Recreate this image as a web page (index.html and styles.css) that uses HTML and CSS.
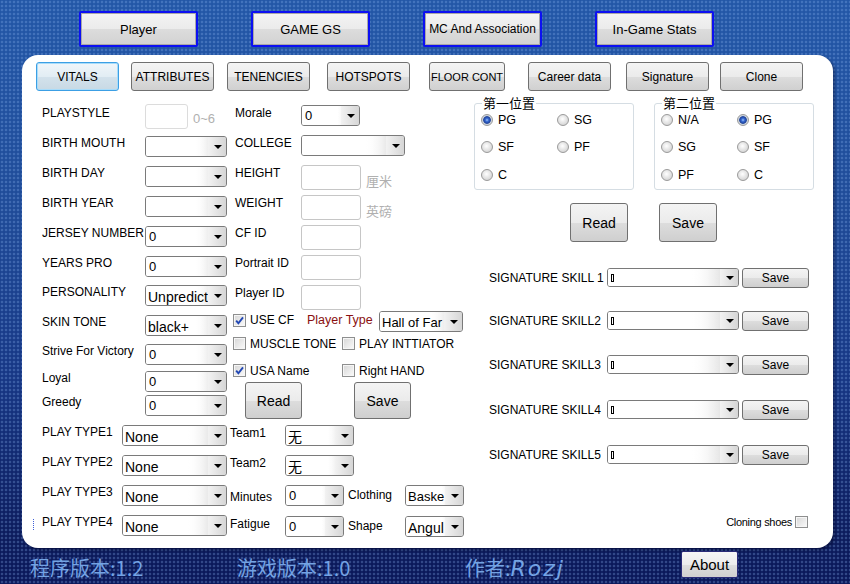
FILE: index.html
```html
<!DOCTYPE html>
<html lang="zh-CN">
<head>
    <meta charset="UTF-8">
    <title>Player Editor</title>
    <link rel="stylesheet" href="styles.css">
</head>
<body>
    <nav class="topbar">
        <button class="top-btn">Player</button>
        <button class="top-btn">GAME GS</button>
        <button class="top-btn top-btn-sm">MC And Association</button>
        <button class="top-btn">In-Game Stats</button>
    </nav>

    <div class="panel">
        <div class="tabs">
            <button class="tab tab-on">VITALS</button>
            <button class="tab">ATTRIBUTES</button>
            <button class="tab">TENENCIES</button>
            <button class="tab">HOTSPOTS</button>
            <button class="tab tab-narrow">FLOOR CONT</button>
            <button class="tab">Career data</button>
            <button class="tab">Signature</button>
            <button class="tab">Clone</button>
        </div>

        <div class="form">
            <!-- 左列 -->
            <div class="col-left">
                <div class="row"><span class="lbl lbl-top">PLAYSTYLE</span><span class="txt txt-off"></span><span class="unit unit-hint">0~6</span></div>
                <div class="row"><span class="lbl">BIRTH MOUTH</span><span class="combo cb-82"><span class="val"></span><i class="arrow"></i></span></div>
                <div class="row"><span class="lbl">BIRTH DAY</span><span class="combo cb-82"><span class="val"></span><i class="arrow"></i></span></div>
                <div class="row"><span class="lbl">BIRTH YEAR</span><span class="combo cb-82"><span class="val"></span><i class="arrow"></i></span></div>
                <div class="row"><span class="lbl">JERSEY NUMBER</span><span class="combo cb-82"><span class="val">0</span><i class="arrow"></i></span></div>
                <div class="row"><span class="lbl">YEARS PRO</span><span class="combo cb-82"><span class="val">0</span><i class="arrow"></i></span></div>
                <div class="row"><span class="lbl">PERSONALITY</span><span class="combo cb-82"><span class="val big">Unpredict</span><i class="arrow"></i></span></div>
                <div class="row"><span class="lbl">SKIN TONE</span><span class="combo cb-82"><span class="val big">black+</span><i class="arrow"></i></span></div>
                <div class="row"><span class="lbl">Strive For Victory</span><span class="combo cb-82"><span class="val">0</span><i class="arrow"></i></span></div>
                <div class="row"><span class="lbl">Loyal</span><span class="combo cb-82"><span class="val">0</span><i class="arrow"></i></span></div>
                <div class="row"><span class="lbl">Greedy</span><span class="combo cb-82"><span class="val">0</span><i class="arrow"></i></span></div>
                <div class="row"><span class="lbl lbl-short">PLAY TYPE1</span><span class="combo cb-105"><span class="val big">None</span><i class="arrow"></i></span></div>
                <div class="row"><span class="lbl lbl-short">PLAY TYPE2</span><span class="combo cb-105"><span class="val big">None</span><i class="arrow"></i></span></div>
                <div class="row"><span class="lbl lbl-short">PLAY TYPE3</span><span class="combo cb-105"><span class="val big">None</span><i class="arrow"></i></span></div>
                <div class="row"><i class="mark"></i><span class="lbl lbl-short">PLAY TYPE4</span><span class="combo cb-105"><span class="val big">None</span><i class="arrow"></i></span></div>
            </div>

            <!-- 中列 -->
            <div class="col-mid">
                <div class="row"><span class="lbl lbl-mid">Morale</span><span class="combo cb-59"><span class="val">0</span><i class="arrow"></i></span></div>
                <div class="row"><span class="lbl lbl-mid">COLLEGE</span><span class="combo cb-104"><span class="val"></span><i class="arrow"></i></span></div>
                <div class="row"><span class="lbl lbl-mid">HEIGHT</span><span class="txt"></span><span class="unit">厘米</span></div>
                <div class="row"><span class="lbl lbl-mid">WEIGHT</span><span class="txt"></span><span class="unit">英磅</span></div>
                <div class="row"><span class="lbl lbl-mid">CF ID</span><span class="txt"></span></div>
                <div class="row"><span class="lbl lbl-mid">Portrait ID</span><span class="txt"></span></div>
                <div class="row"><span class="lbl lbl-mid">Player ID</span><span class="txt"></span></div>
                <div class="row">
                    <label class="chk-item chk-cf"><span class="chk"><svg viewBox="0 0 11 11" width="11" height="11"><path d="M2.2 5.6 L4.4 8.3 L9 2.4" fill="none" stroke="#2147b4" stroke-width="1.9"/></svg></span>USE CF</label>
                    <span class="ptype">Player Type</span>
                    <span class="combo cb-84"><span class="val mid">Hall of Far</span><i class="arrow"></i></span>
                </div>
                <div class="row">
                    <label class="chk-item chk-wide"><span class="chk"></span>MUSCLE TONE</label>
                    <label class="chk-item"><span class="chk"></span>PLAY INTTIATOR</label>
                </div>
                <div class="row">
                    <label class="chk-item chk-wide"><span class="chk"><svg viewBox="0 0 11 11" width="11" height="11"><path d="M2.2 5.6 L4.4 8.3 L9 2.4" fill="none" stroke="#2147b4" stroke-width="1.9"/></svg></span>USA Name</label>
                    <label class="chk-item"><span class="chk"></span>Right HAND</label>
                </div>
                <div class="row btn-row">
                    <button class="btn btn-mid">Read</button>
                    <button class="btn btn-mid">Save</button>
                </div>
                <div class="row"><span class="lbl lbl-team">Team1</span><span class="combo cb-69"><span class="val big cjk">无</span><i class="arrow"></i></span></div>
                <div class="row"><span class="lbl lbl-team">Team2</span><span class="combo cb-69"><span class="val big cjk">无</span><i class="arrow"></i></span></div>
                <div class="row">
                    <span class="lbl lbl-team lbl-low">Minutes</span><span class="combo cb-59"><span class="val">0</span><i class="arrow"></i></span>
                    <span class="lbl lbl-cloth">Clothing</span><span class="combo cb-59"><span class="val mid">Baske</span><i class="arrow"></i></span>
                </div>
                <div class="row">
                    <span class="lbl lbl-team">Fatigue</span><span class="combo cb-59"><span class="val">0</span><i class="arrow"></i></span>
                    <span class="lbl lbl-cloth">Shape</span><span class="combo cb-59"><span class="val big">Angul</span><i class="arrow"></i></span>
                </div>
            </div>

            <!-- 右列 -->
            <div class="col-right">
                <div class="groups">
                    <fieldset class="grp">
                        <legend>第一位置</legend>
                        <div class="radios">
                            <label class="rad"><span class="dot dot-on"></span>PG</label>
                            <label class="rad"><span class="dot"></span>SG</label>
                            <label class="rad"><span class="dot"></span>SF</label>
                            <label class="rad"><span class="dot"></span>PF</label>
                            <label class="rad"><span class="dot"></span>C</label>
                        </div>
                    </fieldset>
                    <fieldset class="grp">
                        <legend>第二位置</legend>
                        <div class="radios">
                            <label class="rad"><span class="dot"></span>N/A</label>
                            <label class="rad"><span class="dot dot-on"></span>PG</label>
                            <label class="rad"><span class="dot"></span>SG</label>
                            <label class="rad"><span class="dot"></span>SF</label>
                            <label class="rad"><span class="dot"></span>PF</label>
                            <label class="rad"><span class="dot"></span>C</label>
                        </div>
                    </fieldset>
                </div>

                <div class="rw-btns">
                    <button class="btn btn-big">Read</button>
                    <button class="btn btn-big">Save</button>
                </div>

                <div class="sig-list">
                    <div class="sig-row"><span class="sig-lbl">SIGNATURE SKILL 1</span><span class="combo cb-132"><span class="val"><i class="caret"></i></span><i class="arrow"></i></span><button class="btn btn-sm">Save</button></div>
                    <div class="sig-row"><span class="sig-lbl">SIGNATURE SKILL2</span><span class="combo cb-132"><span class="val"><i class="caret"></i></span><i class="arrow"></i></span><button class="btn btn-sm">Save</button></div>
                    <div class="sig-row"><span class="sig-lbl">SIGNATURE SKILL3</span><span class="combo cb-132"><span class="val"><i class="caret"></i></span><i class="arrow"></i></span><button class="btn btn-sm">Save</button></div>
                    <div class="sig-row"><span class="sig-lbl">SIGNATURE SKILL4</span><span class="combo cb-132"><span class="val"><i class="caret"></i></span><i class="arrow"></i></span><button class="btn btn-sm">Save</button></div>
                    <div class="sig-row"><span class="sig-lbl">SIGNATURE SKILL5</span><span class="combo cb-132"><span class="val"><i class="caret"></i></span><i class="arrow"></i></span><button class="btn btn-sm">Save</button></div>
                </div>

                <div class="clone-row">
                    <span>Cloning shoes</span><span class="chk"></span>
                </div>
            </div>
        </div>
    </div>

    <footer class="footer">
        <span class="ver">程序版本:1.2</span>
        <span class="ver">游戏版本:1.0</span>
        <span class="ver">作者:<span class="author">Rozj</span></span>
        <button class="about">About</button>
    </footer>
</body>
</html>
```

FILE: styles.css
```css
* {
    margin: 0;
    padding: 0;
    box-sizing: border-box;
}

body {
    width: 850px;
    height: 584px;
    overflow: hidden;
    font-family: "Liberation Sans", "Noto Sans CJK SC", sans-serif;
    font-size: 12px;
    color: #000;
    background:
        radial-gradient(circle at 2px 2px, rgba(140, 180, 240, 0.30) 0, rgba(140, 180, 240, 0.30) 1px, transparent 1.7px) 0 0 / 4px 4px,
        linear-gradient(#2357a7 0%, #1f4b98 35%, #163684 65%, #0c1b5c 92%, #0a175a 100%);
}

button {
    font: inherit;
    color: #000;
    cursor: pointer;
}

/* 顶部按钮 */
.topbar {
    display: flex;
    gap: 53px;
    height: 55px;
    padding: 11px 0 0 79px;
}

.top-btn {
    width: 119px;
    height: 36px;
    border: 2px solid #0c10f2;
    border-radius: 2px;
    box-shadow: inset 0 0 0 1px #a8a8a8;
    background: linear-gradient(#f4f4f4 0%, #ebebeb 50%, #dcdcdc 51%, #d2d2d2 100%);
    font-size: 13px;
}

.top-btn-sm {
    font-size: 12px;
}

/* 白色面板 */
.panel {
    width: 811px;
    height: 493px;
    margin-left: 22px;
    padding: 7px 0 0 14px;
    background: #fff;
    border-radius: 16px;
    box-shadow: 2px 2px 3px rgba(0, 0, 30, 0.4);
}

.tabs {
    display: flex;
}

.tab {
    width: 83px;
    height: 29px;
    border: 1px solid #707070;
    border-radius: 3px;
    background: linear-gradient(#f4f4f4 0%, #ebebeb 50%, #dddddd 51%, #d0d0d0 100%);
    font-size: 12px;
}

.tab:nth-child(2) { margin-left: 12px; }
.tab:nth-child(3) { margin-left: 13px; }
.tab:nth-child(4) { margin-left: 17px; }
.tab:nth-child(5) { margin-left: 19px; }
.tab:nth-child(6) { margin-left: 23px; }
.tab:nth-child(7) { margin-left: 15px; }
.tab:nth-child(8) { margin-left: 11px; }

.tab-narrow {
    width: 76px;
    font-size: 11px;
}

.tab-on {
    border-color: #3c9fe4;
    box-shadow: inset 0 0 0 1px #a8dcfa;
    background: linear-gradient(#f0f6fa 0%, #e2edf4 50%, #d3e2ec 51%, #c8d9e4 100%);
}

/* 表单 */
.form {
    display: flex;
    align-items: flex-start;
    margin: 5px 0 0 6px;
}

.row {
    display: flex;
    align-items: flex-start;
}

.lbl {
    flex: none;
    width: 103px;
    line-height: 14px;
    white-space: nowrap;
}

.lbl-top {
    padding-top: 2px;
}

.lbl-short {
    width: 80px;
}

.col-left {
    width: 188px;
    margin-top: 8px;
    display: grid;
    grid-template-rows: 32px 30px 30px 30px 30px 29px 30px 29px 27px 24px 30px 30px 30px 30px 21px;
}

.col-mid {
    width: 244px;
    margin-top: 9px;
    display: grid;
    grid-template-rows: 30px 30px 30px 30px 30px 30px 26px 26px 27px 18px 43px 30px 30px 31px 21px;
}

.lbl-mid {
    width: 66px;
    margin-left: 5px;
    padding-top: 1px;
}

.lbl-team {
    width: 55px;
    padding-top: 1px;
}

.lbl-low {
    padding-top: 5px;
}

.lbl-cloth {
    width: 57px;
    margin-left: 4px;
    padding-top: 3px;
}

.mark {
    width: 1px;
    height: 11px;
    margin: 4px 8px 0 -9px;
    border-left: 1px dotted #3f5fd8;
}

/* 输入框 */
.txt {
    flex: none;
    width: 60px;
    height: 25px;
    border: 1px solid #c6c6c6;
    border-radius: 3px;
    background: #fff;
}

.txt-off {
    width: 43px;
    border-color: #dcdcdc;
}

.unit {
    align-self: center;
    margin-left: 5px;
    color: #b0b0b0;
    font-size: 13px;
}

.unit-hint {
    margin-top: -3px;
}

/* 下拉框 */
.combo {
    flex: none;
    display: flex;
    height: 21px;
    border: 1px solid #7a7a7a;
    border-radius: 3px;
    overflow: hidden;
    background: linear-gradient(to right, #fff 0%, #fff 62%, #ececec 80%, #dadada 100%);
}

.cb-82 { width: 82px; }
.cb-105 { width: 105px; }
.cb-59 { width: 59px; }
.cb-104 { width: 104px; }
.cb-69 { width: 69px; }
.cb-84 { width: 84px; }
.cb-132 { width: 132px; height: 19px; }

.val {
    flex: 1;
    min-width: 0;
    overflow: hidden;
    white-space: nowrap;
    padding: 1px 0 0 3px;
    font-size: 13px;
    line-height: 18px;
    background: linear-gradient(to right, #fff 75%, rgba(255, 255, 255, 0));
}

.val.big {
    font-size: 14px;
    padding: 2px 0 0 2px;
}

.val.mid {
    font-size: 13px;
    padding: 2px 0 0 2px;
}

.val.cjk {
    font-family: "Noto Sans CJK SC", sans-serif;
    line-height: 17px;
}

.arrow {
    flex: none;
    width: 18px;
    display: flex;
    align-items: center;
    justify-content: flex-end;
    padding-right: 4px;
    background: linear-gradient(to right, #f2f2f2, #d6d6d6);
}

.arrow::after {
    content: "";
    border-left: 4px solid transparent;
    border-right: 4px solid transparent;
    border-top: 4px solid #000;
}

.caret {
    display: inline-block;
    width: 3px;
    height: 8px;
    margin-top: 4px;
    border: 1px solid #000;
    vertical-align: top;
}

/* 复选框 */
.chk-item {
    display: flex;
    align-items: flex-start;
    gap: 4px;
    line-height: 14px;
    font-size: 12px;
    white-space: nowrap;
}

.chk-cf {
    width: 74px;
    margin-left: 3px;
    padding-top: 2px;
}

.chk-cf .chk {
    margin-top: 1px;
}

.chk-wide {
    width: 109px;
    margin-left: 3px;
}

.chk {
    flex: none;
    width: 13px;
    height: 13px;
    border: 1px solid #8e8f8f;
    background: linear-gradient(135deg, #d6d6d6, #fbfbfb);
    box-shadow: inset 0 0 0 1px #f6f6f6;
    display: flex;
    align-items: center;
    justify-content: center;
}

.ptype {
    width: 72px;
    padding-top: 2px;
    line-height: 14px;
    color: #8a1010;
    font-size: 12.5px;
    white-space: nowrap;
}

/* 按钮 */
.btn {
    flex: none;
    border: 1px solid #707070;
    border-radius: 3px;
    background: linear-gradient(#f4f4f4 0%, #ebebeb 50%, #dddddd 51%, #cfcfcf 100%);
    font-size: 14px;
}

.btn-row {
    gap: 52px;
    padding-left: 15px;
}

.btn-mid {
    width: 57px;
    height: 37px;
}

.btn-big {
    width: 58px;
    height: 39px;
}

.btn-sm {
    width: 67px;
    height: 20px;
    margin-left: 3px;
    font-size: 12px;
}

/* 右列 */
.col-right {
    width: 338px;
}

.groups {
    display: flex;
    gap: 20px;
}

.grp {
    width: 160px;
    border: 1px solid #d5dde3;
    border-radius: 3px;
    padding: 0 0 1px 6px;
}

.grp legend {
    padding: 0 1px;
    margin-left: 1px;
    font-family: "Noto Sans CJK SC", sans-serif;
    font-size: 13px;
    line-height: 14px;
}

.radios {
    margin-top: 3px;
    display: grid;
    grid-template-columns: 76px 76px;
    grid-template-rows: 27px 28px 20px;
}

.rad {
    display: flex;
    align-items: center;
    gap: 5px;
    height: 14px;
    font-size: 12.5px;
}

.dot {
    flex: none;
    width: 12px;
    height: 12px;
    border: 1px solid #9a9a9a;
    border-radius: 50%;
    background: radial-gradient(circle at 45% 40%, #ffffff 0, #e6e6e6 45%, #c8c8c8 100%);
}

.dot-on {
    background: radial-gradient(circle at 50% 50%, #a8c8f6 0, #3b6fd6 1.5px, #1c3f97 3.4px, #c9d2dc 4.2px, #e9e9e9 100%);
}

.rw-btns {
    display: flex;
    gap: 31px;
    margin-top: 13px;
    padding-left: 96px;
}

.sig-list {
    margin-top: 26px;
    display: grid;
    grid-template-rows: 43px 44px 45px 45px 20px;
}

.sig-row {
    display: flex;
    align-items: flex-start;
}

.sig-lbl {
    width: 118px;
    margin-left: 15px;
    padding-top: 3px;
    line-height: 14px;
    white-space: nowrap;
}

.clone-row {
    display: flex;
    justify-content: flex-end;
    align-items: center;
    gap: 3px;
    margin-top: 51px;
    padding-right: 4px;
    font-size: 11px;
    letter-spacing: -0.3px;
}

.clone-row .chk {
    width: 13px;
    height: 12px;
}

/* 底部 */
.footer {
    display: grid;
    grid-template-columns: 207px 228px 216px 57px;
    margin-top: 3px;
    padding-left: 30px;
}

.ver {
    padding-top: 5px;
    font-family: "Noto Sans CJK SC", sans-serif;
    font-size: 20px;
    line-height: 24px;
    color: #74a3e4;
    white-space: nowrap;
}

.author {
    font-family: "DejaVu Sans", sans-serif;
    font-size: 22px;
    font-style: italic;
    letter-spacing: 2px;
}

.about {
    width: 57px;
    height: 27px;
    border: 1px solid #2b2b78;
    border-radius: 2px;
    background: linear-gradient(#f6f6f6 0%, #ececec 50%, #dedede 51%, #d0d0d0 100%);
    font-size: 15px;
}
```
